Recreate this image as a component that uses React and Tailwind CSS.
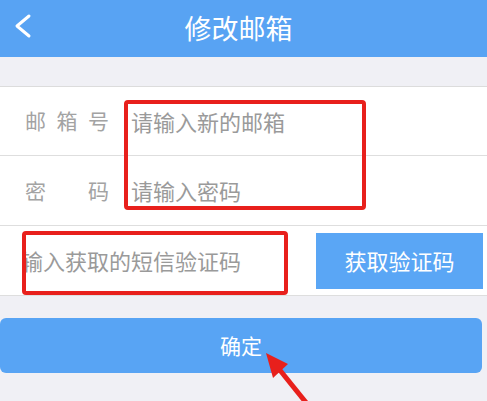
const font = { fontFamily: '"Noto Sans CJK SC", "Noto Sans", sans-serif' }

function Label({ chars }) {
  return (
    <div className="flex w-[84px] justify-between text-[21px] text-[#a3a3a3]">
      {chars.map((ch) => <span key={ch}>{ch}</span>)}
    </div>
  )
}

export default function App() {
  return (
    <div className="relative h-[401px] w-[487px] overflow-hidden bg-[#f0f0f5]" style={font}>
      <header className="relative flex h-[57px] items-center justify-center bg-[#58a3f3] pr-[10px] pb-[3px]">
        <svg className="absolute left-0 top-0" width="40" height="57">
          <polyline points="29,16 17,26 29,36" fill="none" stroke="white" strokeWidth="3" strokeLinecap="round" strokeLinejoin="round" />
        </svg>
        <h1 className="text-[27px] leading-none text-white">修改邮箱</h1>
      </header>

      <div className="h-[30px] border-b border-[#dcdcdc]" />

      <div className="bg-white">
        <div className="flex h-[69px] items-center border-b border-[#dedede] pl-[25px]">
          <Label chars={['邮', '箱', '号']} />
          <div className="ml-[22px] text-[22px] text-[#9a9a9a]">请输入新的邮箱</div>
        </div>
        <div className="flex h-[70px] items-center border-b border-[#dedede] pl-[25px]">
          <Label chars={['密', '码']} />
          <div className="ml-[22px] text-[22px] text-[#9a9a9a]">请输入密码</div>
        </div>
        <div className="flex h-[70px] items-center border-b border-[#dedede] pr-[4px]">
          <div className="ml-[26px] flex-1 overflow-hidden whitespace-nowrap">
            <div className="-ml-[5px] text-[22px] text-[#9a9a9a]">输入获取的短信验证码</div>
          </div>
          <button className="h-[56px] w-[167px] bg-[#5aa6f5] text-[22px] text-white">获取验证码</button>
        </div>
      </div>

      <div className="pt-[22px] pr-[5px]">
        <button className="h-[55px] w-full rounded-md bg-[#58a4f4] text-[21px] text-white">确定</button>
      </div>

      {/* annotation boxes */}
      <div className="absolute left-[124px] top-[100px] h-[110px] w-[242px] rounded-[4px] border-[4px] border-[#e8201c]" />
      <div className="absolute left-[22px] top-[231px] h-[64px] w-[266px] rounded-[4px] border-[4px] border-[#e8201c]" />

      <svg className="absolute left-0 top-0" width="487" height="401">
        <line x1="279" y1="369" x2="308" y2="405" stroke="#e8201c" strokeWidth="5" />
        <polygon points="266,353 273,378 288,364" fill="#e8201c" />
      </svg>
    </div>
  )
}
